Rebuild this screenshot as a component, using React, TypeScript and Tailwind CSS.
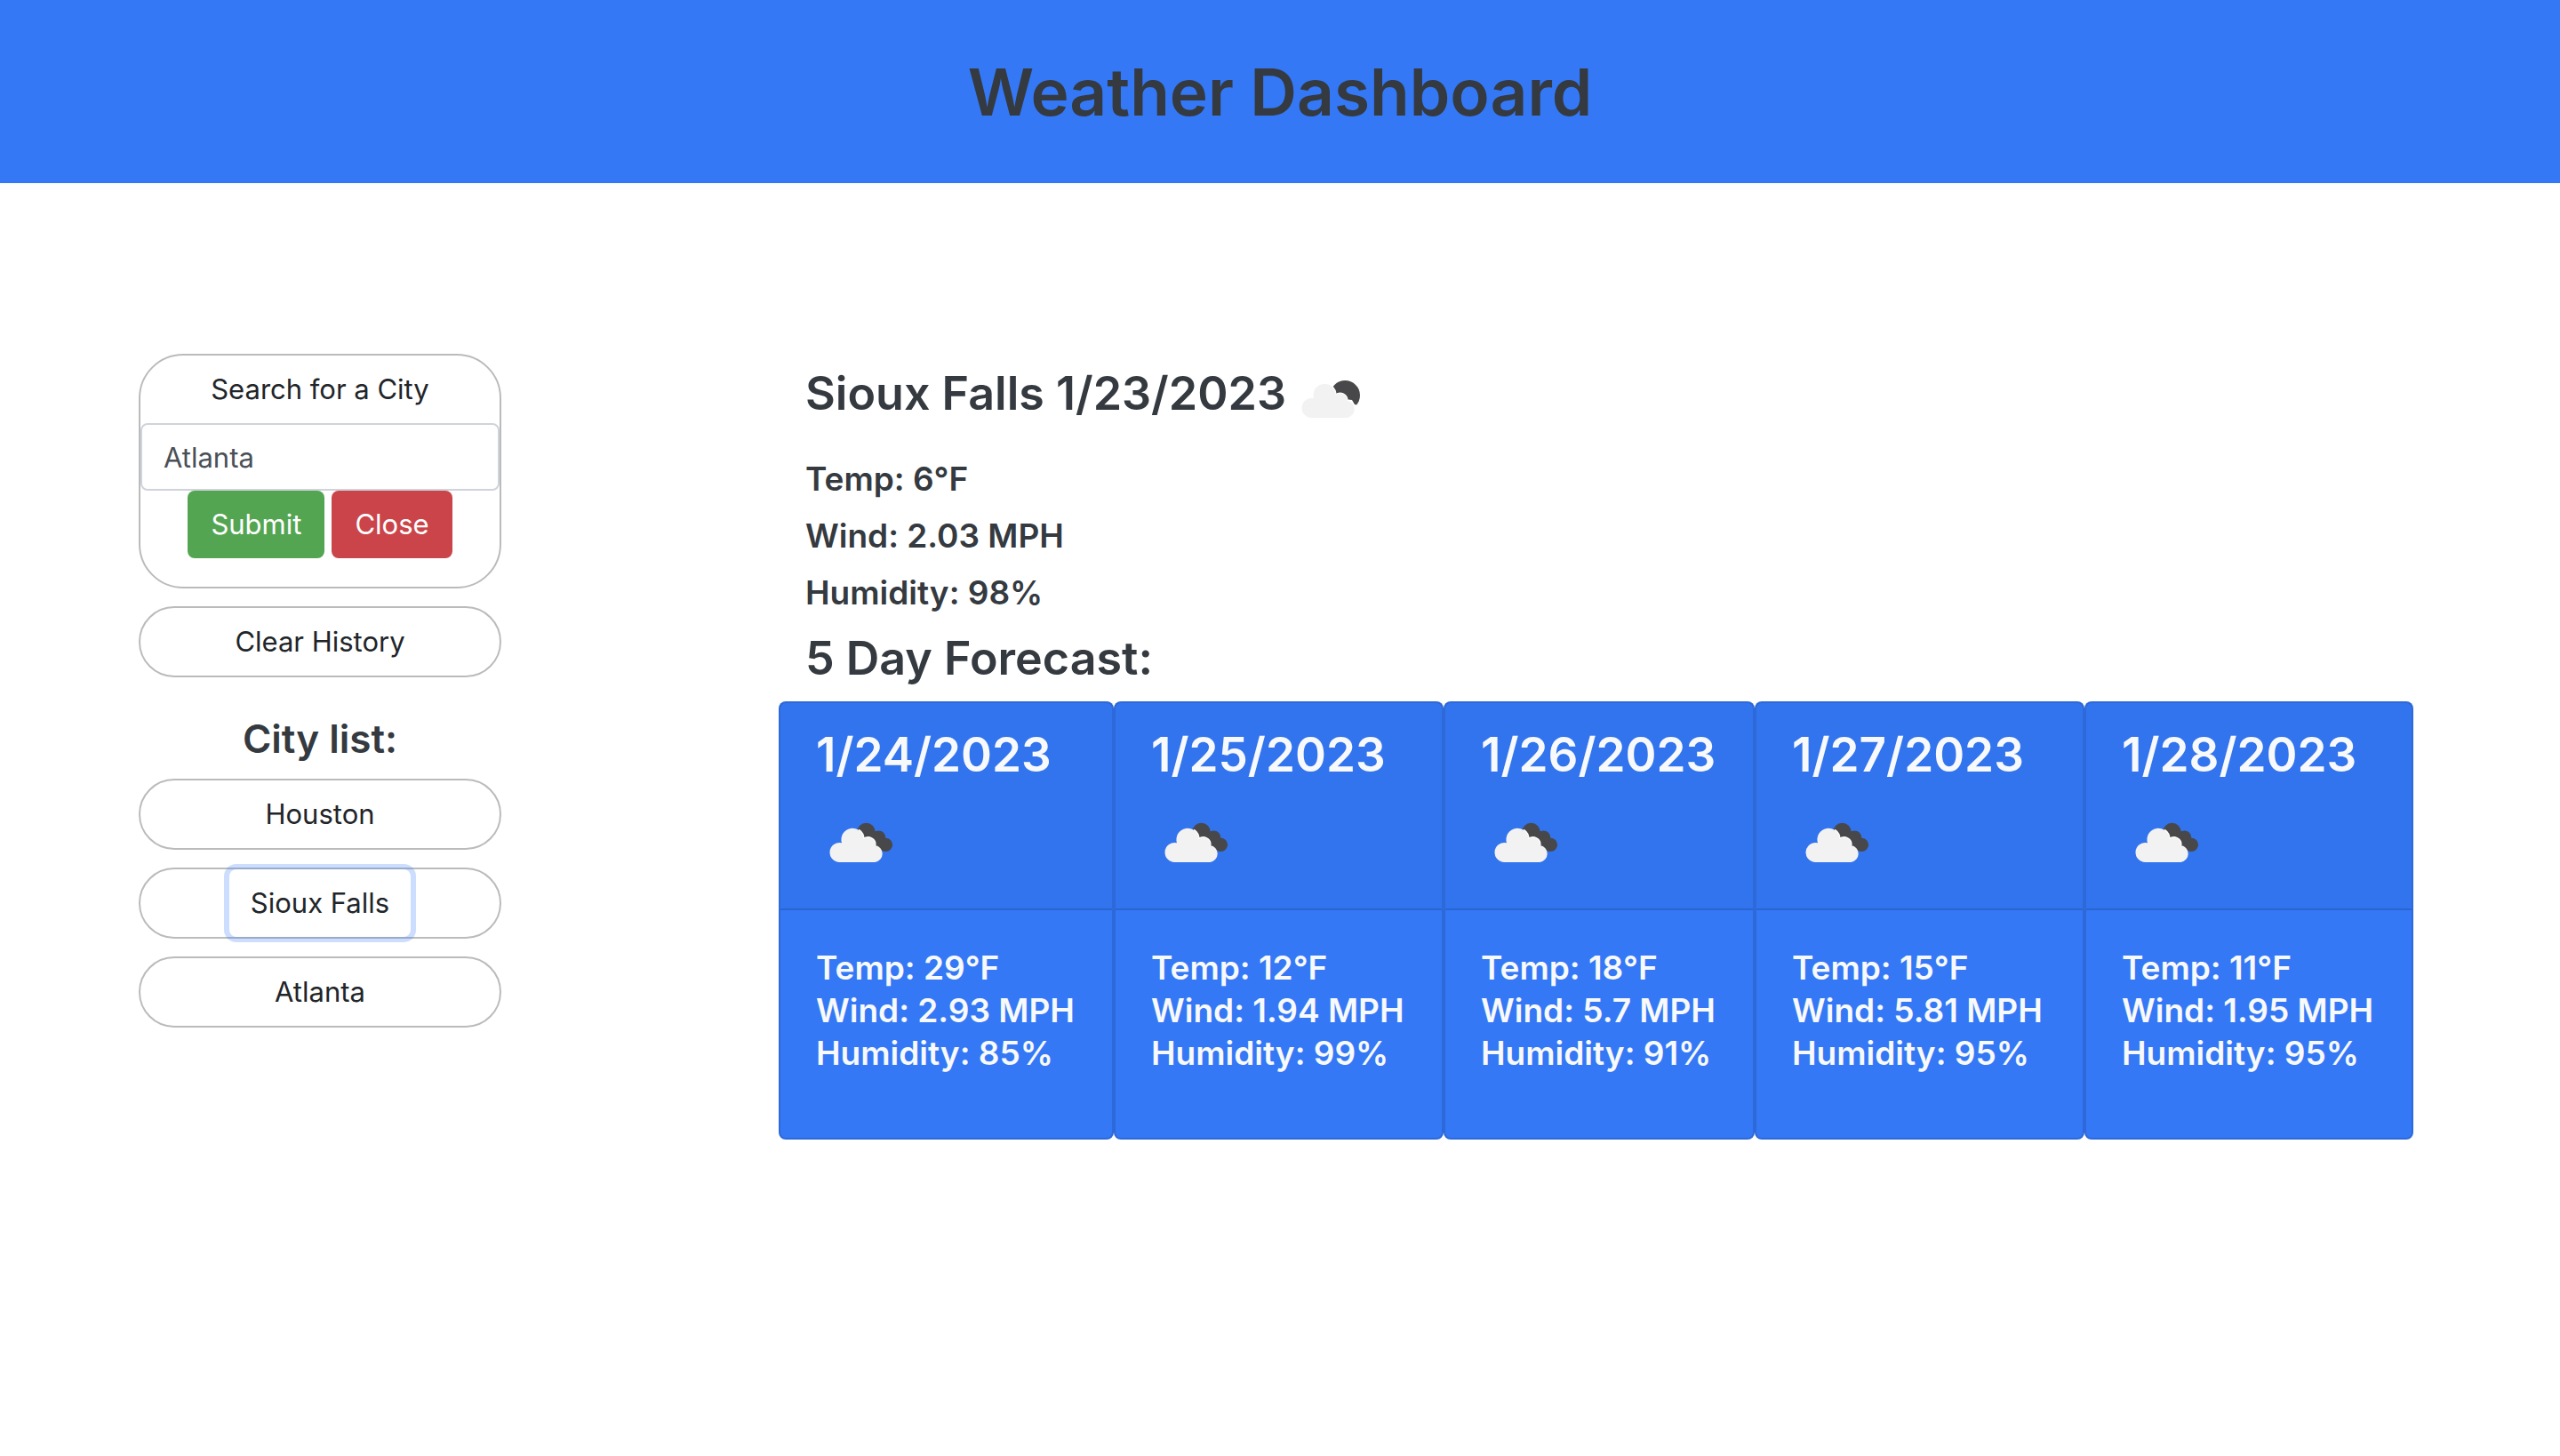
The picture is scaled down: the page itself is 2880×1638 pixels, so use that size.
import { useState } from "react";

type Day = { date: string; temp: string; wind: string; humidity: string };

const days: Day[] = [
  { date: "1/24/2023", temp: "29", wind: "2.93", humidity: "85" },
  { date: "1/25/2023", temp: "12", wind: "1.94", humidity: "99" },
  { date: "1/26/2023", temp: "18", wind: "5.7", humidity: "91" },
  { date: "1/27/2023", temp: "15", wind: "5.81", humidity: "95" },
  { date: "1/28/2023", temp: "11", wind: "1.95", humidity: "95" },
];

const cities = ["Houston", "Sioux Falls", "Atlanta"];

const cloudPath =
  "M27 71 A11 11 0 1 1 29 49.3 A12.6 12.6 0 1 1 53.6 45.4 A8 8 0 0 1 66.6 52 A9.6 9.6 0 0 1 66.4 71 Z";

function BrokenClouds() {
  return (
    <svg viewBox="0 0 100 100" className="size-[100px]" role="img" aria-label="Broken clouds">
      <g fill="#48484a">
        <circle cx="56.5" cy="37" r="10.2" />
        <circle cx="70.5" cy="43.2" r="7.8" />
        <circle cx="78.5" cy="51.3" r="7.6" />
        <path d="M50 40 L64 34 L78 46 L78 58.8 L66 56 Z" />
      </g>
      <path d="M48 34.6 A12.6 12.6 0 0 1 53.6 45 A8 8 0 0 1 66.6 52" fill="none" stroke="#fff" strokeWidth="2" />
      <path d={cloudPath} fill="#f2f2f2" />
    </svg>
  );
}

function FewCloudsNight() {
  return (
    <svg viewBox="0 0 100 100" className="size-[100px]" role="img" aria-label="Few clouds">
      <circle cx="64.2" cy="45.8" r="16.8" fill="#48484a" />
      <path d={cloudPath} fill="#fff" stroke="#fff" strokeWidth="2" />
      <path d="M64 50 L72 51 L75 56 L79 57 L76 70 L60 70 Z" fill="#fff" />
      <path d={cloudPath} fill="#f2f2f2" />
    </svg>
  );
}

function Pill({ label, focused }: { label: string; focused?: boolean }) {
  return (
    <div className="flex justify-center rounded-full border-2 border-[#bbbbbb]">
      <button
        type="button"
        className={
          focused
            ? "rounded-lg px-6 py-3.5 leading-12 ring-[6px] ring-[#3478f6]/25"
            : "rounded-lg px-6 py-3.5 leading-12"
        }
      >
        {label}
      </button>
    </div>
  );
}

function DayCard({ day }: { day: Day }) {
  return (
    <article className="min-w-0 rounded-lg border-2 border-black/12 bg-[#3478f6] text-[#f8f9fa]">
      <header className="border-b-2 border-black/12 bg-black/3 px-10 pt-[25px] pb-[23px]">
        <h3 className="mb-4 text-[53px] leading-[67px] font-semibold">{day.date}</h3>
        <BrokenClouds />
      </header>
      <div className="px-10 pt-[41px] pb-[71px] text-[37px] leading-12 font-semibold whitespace-nowrap">
        <p>Temp: {day.temp}°F</p>
        <p>Wind: {day.wind} MPH</p>
        <p>Humidity: {day.humidity}%</p>
      </div>
    </article>
  );
}

export default function App() {
  const [city, setCity] = useState("Atlanta");
  return (
    <div className="min-h-screen bg-white font-['Inter',sans-serif] text-[31px] text-[#212529]">
      <header className="bg-[#3478f6] pt-14 pb-[54px] text-center">
        <h1 className="text-[73px] leading-24 font-semibold text-[#343a40]">Weather Dashboard</h1>
      </header>
      <div className="flex items-start gap-[312px] pt-48 pr-[165px] pl-39">
        <aside className="flex w-[408px] shrink-0 flex-col gap-5">
          <form
            className="flex flex-col rounded-[50px] border-2 border-[#bbbbbb] pb-8"
            onSubmit={(e) => e.preventDefault()}
          >
            <label htmlFor="city" className="py-3.5 text-center leading-12">
              Search for a City
            </label>
            <input
              id="city"
              value={city}
              onChange={(e) => setCity(e.target.value)}
              className="h-19 w-full rounded-lg border-2 border-[#ced4da] bg-white px-6 text-[#495057] outline-none"
            />
            <div className="flex justify-center gap-2 text-white">
              <button type="submit" className="rounded-lg bg-[#54a552] px-6.5 py-3.5 leading-12">
                Submit
              </button>
              <button type="button" className="rounded-lg bg-[#ca444a] px-6.5 py-3.5 leading-12">
                Close
              </button>
            </div>
          </form>
          <Pill label="Clear History" />
          <h4 className="mt-5 -mb-1 text-center text-[44px] leading-[58px] font-semibold text-[#343a40]">City list:</h4>
          {cities.map((name) => (
            <Pill key={name} label={name} focused={name === "Sioux Falls"} />
          ))}
        </aside>
        <main className="min-w-0 flex-1 text-[#343a40]">
          <section className="px-[30px] pt-px text-[37px] leading-12 font-semibold">
            <div className="mb-4 flex gap-0.5">
              <h3 className="pt-2.5 text-[52px] leading-[67px]">Sioux Falls 1/23/2023</h3>
              <FewCloudsNight />
            </div>
            <p className="mb-4">Temp: 6°F</p>
            <p className="mb-4">Wind: 2.03 MPH</p>
            <p className="mb-4">Humidity: 98%</p>
            <h3 className="mb-[15px] text-[52px] leading-[67px]">5 Day Forecast:</h3>
          </section>
          <section className="grid grid-cols-[377fr_371fr_350fr_371fr_370fr]">
            {days.map((day) => (
              <DayCard key={day.date} day={day} />
            ))}
          </section>
        </main>
      </div>
    </div>
  );
}
